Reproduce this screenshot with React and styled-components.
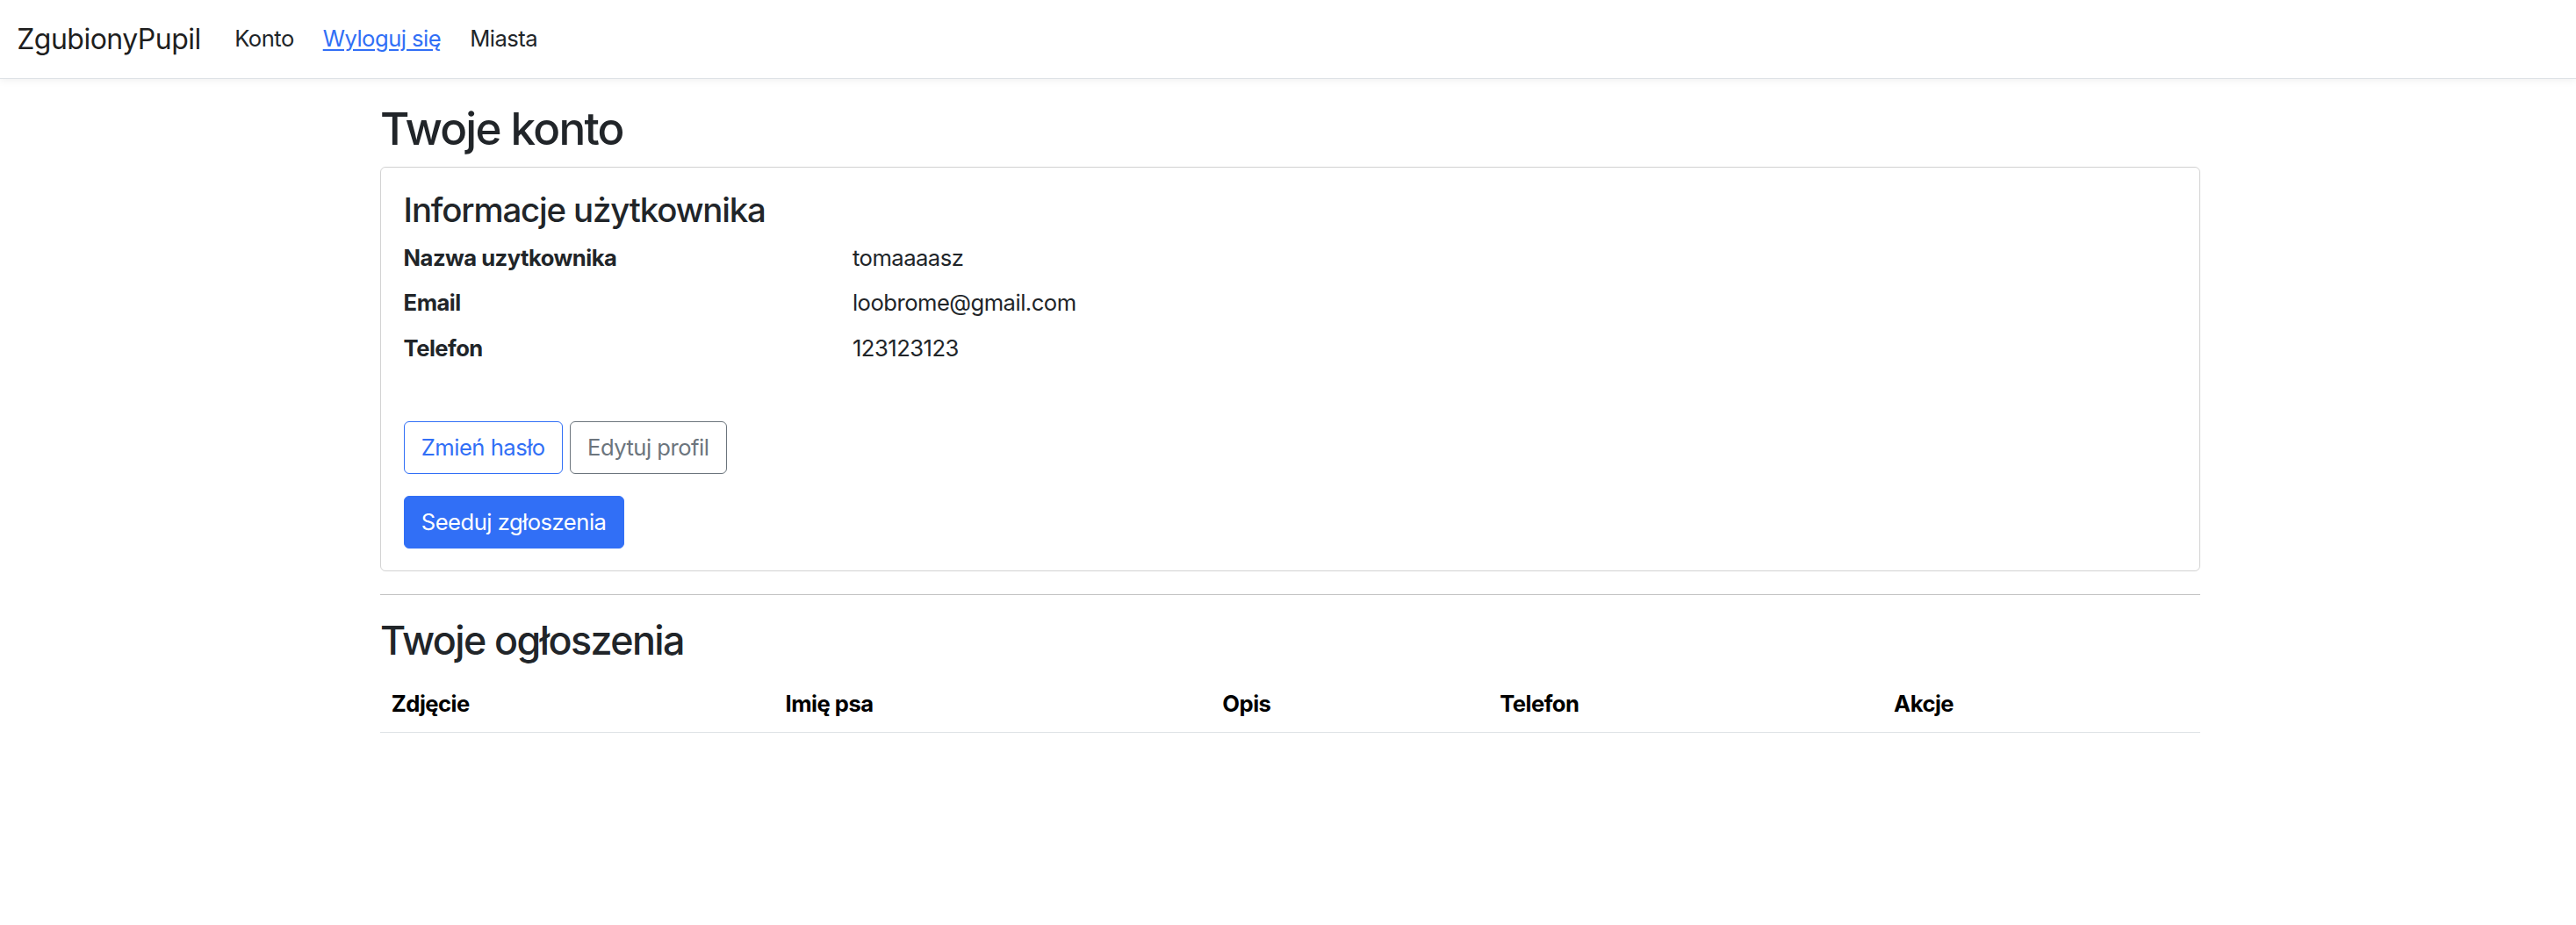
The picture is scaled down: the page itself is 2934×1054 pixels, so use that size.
import React from "react";
import styled, { createGlobalStyle } from "styled-components";

const GlobalStyle = createGlobalStyle`
  * {
    box-sizing: border-box;
  }
  body {
    margin: 0;
    background: #ffffff;
    color: #212529;
    font-family: Inter, "Noto Sans", "Liberation Sans", sans-serif;
    font-size: 25.6px;
    line-height: 1.5;
    letter-spacing: -0.02em;
  }
`;

const Navbar = styled.nav`
  display: flex;
  align-items: center;
  height: 90px;
  padding: 0 19.2px;
  background: #ffffff;
  border-bottom: 1px solid #dee2e6;
  box-shadow: 0 3px 8px rgba(0, 0, 0, 0.05);
`;

const Brand = styled.a`
  font-size: 32px;
  line-height: 1.5;
  color: rgba(0, 0, 0, 0.9);
  text-decoration: none;
  margin-right: 25.6px;
`;

const NavList = styled.div`
  display: flex;
  align-items: center;
`;

const NavLink = styled.a`
  padding: 0 12.8px;
  color: #212529;
  text-decoration: none;
`;

const LinkButton = styled.button`
  font: inherit;
  letter-spacing: inherit;
  padding: 9.6px 19.2px;
  background: none;
  border: 1px solid transparent;
  color: #316ff6;
  text-decoration: underline;
  text-underline-offset: 3px;
  cursor: pointer;
`;

const Container = styled.main`
  max-width: 2112px;
  margin: 0 auto;
  padding: 25.6px 17px 25.6px 22px;
`;

const Heading = styled.h2`
  margin: 0 0 12.8px;
  font-size: ${(p) => p.size}px;
  font-weight: 500;
  line-height: 1.2;
  letter-spacing: -0.035em;
  color: #212529;
`;

const Card = styled.section`
  border: 1px solid rgba(0, 0, 0, 0.175);
  border-radius: 6px;
  padding: 25.6px;
`;

const CardTitle = styled.h4`
  margin: 0 0 12.8px;
  font-size: 38.4px;
  font-weight: 500;
  line-height: 1.2;
  letter-spacing: -0.03em;
`;

const InfoRow = styled.div`
  display: grid;
  grid-template-columns: 25% 75%;
  margin: 0 -12.8px 12.8px;
  & > * {
    padding: 0 12.8px;
  }
`;

const InfoLabel = styled.div`
  font-weight: 700;
`;

const ButtonRow = styled.div`
  display: flex;
  gap: 8px;
  margin-top: ${(p) => p.top}px;
`;

const Button = styled.button`
  font: inherit;
  letter-spacing: inherit;
  line-height: 1.5;
  padding: 9.6px 19.2px;
  border-radius: 6px;
  cursor: pointer;
  border: 1px solid ${(p) => p.color};
  background: ${(p) => (p.solid ? p.color : "#ffffff")};
  color: ${(p) => (p.solid ? "#ffffff" : p.color)};
`;

const Divider = styled.hr`
  margin: 25.6px 0;
  border: 0;
  border-top: 1px solid #c4c4c4;
`;

const Table = styled.table`
  width: 100%;
  border-collapse: collapse;
  table-layout: fixed;
`;

const Th = styled.th`
  text-align: left;
  padding: 12.8px;
  font-weight: 700;
  color: #000000;
  border-bottom: 1px solid #dee2e6;
`;

const columns = [
  { label: "Zdjęcie", width: "21.65%" },
  { label: "Imię psa", width: "24.01%" },
  { label: "Opis", width: "15.24%" },
  { label: "Telefon", width: "21.65%" },
  { label: "Akcje", width: "17.45%" },
];

const info = [
  ["Nazwa uzytkownika", "tomaaaasz"],
  ["Email", "loobrome@gmail.com"],
  ["Telefon", "123123123"],
];

export default function App() {
  return (
    <>
      <GlobalStyle />
      <Navbar>
        <Brand href="#">ZgubionyPupil</Brand>
        <NavList>
          <NavLink href="#">Konto</NavLink>
          <LinkButton>Wyloguj się</LinkButton>
          <NavLink href="#">Miasta</NavLink>
        </NavList>
      </Navbar>
      <Container>
        <Heading size={51.2}>Twoje konto</Heading>
        <Card>
          <CardTitle>Informacje użytkownika</CardTitle>
          {info.map(([label, value]) => (
            <InfoRow key={label}>
              <InfoLabel>{label}</InfoLabel>
              <div>{value}</div>
            </InfoRow>
          ))}
          <ButtonRow top={64}>
            <Button color="#316ff6">Zmień hasło</Button>
            <Button color="#6c757d">Edytuj profil</Button>
          </ButtonRow>
          <ButtonRow top={25.6}>
            <Button color="#316ff6" solid>
              Seeduj zgłoszenia
            </Button>
          </ButtonRow>
        </Card>
        <Divider />
        <Heading size={44.8}>Twoje ogłoszenia</Heading>
        <Table>
          <colgroup>
            {columns.map((c) => (
              <col key={c.label} style={{ width: c.width }} />
            ))}
          </colgroup>
          <thead>
            <tr>
              {columns.map((c) => (
                <Th key={c.label}>{c.label}</Th>
              ))}
            </tr>
          </thead>
          <tbody />
        </Table>
      </Container>
    </>
  );
}
